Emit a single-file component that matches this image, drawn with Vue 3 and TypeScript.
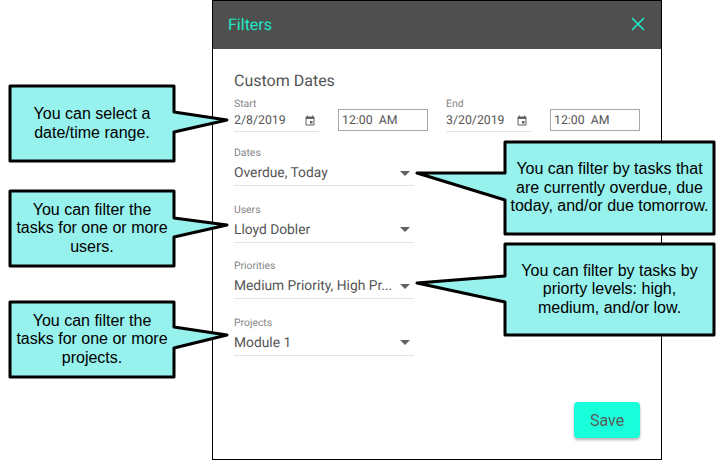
<script setup lang="ts">
const dateRanges = [
  { label: 'Start', date: '2/8/2019', time: '12:00  AM' },
  { label: 'End', date: '3/20/2019', time: '12:00  AM' },
];
const selects = [
  { label: 'Dates', value: 'Overdue, Today' },
  { label: 'Users', value: 'Lloyd Dobler' },
  { label: 'Priorities', value: 'Medium Priority, High Pr...' },
  { label: 'Projects', value: 'Module 1' },
];
// callout outlines, drawn over the dialog
const callouts = [
  { key: 'note-range', points: '10,86 174,86 174,112 227,120 174,132 174,161 10,161', lines: ['You can select a', 'date/time range.'] },
  { key: 'note-users', points: '10,191 174,191 174,218 227,225 174,237 174,266 10,266', lines: ['You can filter the', 'tasks for one or more', 'users.'] },
  { key: 'note-projects', points: '10,302 174,302 174,327 227,335 174,348 174,377 10,377', lines: ['You can filter the', 'tasks for one or more', 'projects.'] },
  { key: 'note-dates', points: '505,142 714,142 714,234 505,234 505,200 417,173 505,173', lines: ['You can filter by tasks that', 'are currently overdue, due', 'today, and/or due tomorrow.'] },
  { key: 'note-priorities', points: '505,244 714,244 714,335 505,335 505,302 417,283 505,276', lines: ['You can filter by tasks by', 'priorty levels: high,', 'medium, and/or low.'] },
];
</script>

<template>
  <div class="page">
    <section class="dialog">
      <header class="head">
        <span class="title">Filters</span>
        <svg class="close" width="14" height="14" viewBox="0 0 14 14"><path d="M1 1 13 13M13 1 1 13" stroke="#1de9c9" stroke-width="1.6" fill="none" /></svg>
      </header>
      <div class="body">
        <h2 class="sub">Custom Dates</h2>
        <div class="dates">
          <div v-for="d in dateRanges" :key="d.label" class="range">
            <div class="date-field">
              <label class="lbl">{{ d.label }}</label>
              <div class="val date-val">
                <span>{{ d.date }}</span>
                <svg width="12" height="12" viewBox="0 0 24 24" fill="#616161"><path d="M17 12h-5v5h5v-5zM16 1v2H8V1H6v2H5c-1.11 0-2 .9-2 2v14c0 1.1.89 2 2 2h14c1.1 0 2-.9 2-2V5c0-1.1-.9-2-2-2h-1V1h-2zm3 18H5V8h14v11z" /></svg>
              </div>
            </div>
            <div class="time">{{ d.time }}</div>
          </div>
        </div>
        <div v-for="s in selects" :key="s.label" class="select">
          <label class="lbl">{{ s.label }}</label>
          <div class="val select-val">
            <span>{{ s.value }}</span>
            <i class="caret"></i>
          </div>
        </div>
        <div class="actions"><button class="save">Save</button></div>
      </div>
    </section>

    <svg class="shapes" width="724" height="460" viewBox="0 0 724 460">
      <polygon v-for="c in callouts" :key="c.key" :points="c.points" fill="#97f1ed" stroke="#000" stroke-width="3" stroke-linejoin="round" />
    </svg>
    <div v-for="c in callouts" :key="c.key" class="note" :class="c.key">
      <span v-for="l in c.lines" :key="l">{{ l }}</span>
    </div>
  </div>
</template>

<style>
html, body { margin: 0; background: #fff; }
</style>

<style scoped>
.page {
  position: relative;
  width: 724px;
  height: 460px;
  overflow: hidden;
  font-family: Roboto, sans-serif;
  color: #555;
}
.dialog {
  box-sizing: border-box;
  width: 450px;
  height: 460px;
  margin-left: 212px;
  border: 1px solid #000;
  display: flex;
  flex-direction: column;
  text-rendering: geometricPrecision;
}
.head {
  height: 48px;
  background: #4f4f4f;
  display: flex;
  align-items: center;
  justify-content: space-between;
  padding: 0 16px 0 15px;
}
.title { margin-bottom: 2px; font-size: 16px; font-weight: 400; color: #1de9c9; }
.close { margin-bottom: 3px; }
.body {
  flex: 1;
  display: flex;
  flex-direction: column;
  padding: 22px 21px 21px;
}
.sub { margin: 0; font-size: 16px; font-weight: 400; line-height: 19px; color: #555; }
.dates { display: flex; gap: 18px; margin-top: 7px; }
.range { display: flex; align-items: flex-end; gap: 19px; }
.date-field { width: 85px; border-bottom: 1px solid #e2e2e2; }
.lbl { display: block; padding-top: 1px; font-size: 10.4px; line-height: 12px; color: #858585; }
.val { display: flex; align-items: center; justify-content: space-between; color: #555; }
.date-val { margin-top: 1px; padding-right: 3px; font-size: 12.3px; line-height: 20px; }
.time {
  box-sizing: border-box;
  width: 90px;
  height: 22px;
  border: 1px solid #a8a8a8;
  padding: 1px 0 0 3px;
  font-size: 12.3px;
  line-height: 20px;
  white-space: pre;
  margin-bottom: 1px;
}
.select {
  width: 180px;
  margin-top: 16.67px;
  border-bottom: 1px solid #e2e2e2;
  padding-bottom: 1px;
}
.dates + .select { margin-top: 14px; }
.select-val { margin-top: 3px; font-size: 13.8px; line-height: 22px; }
.caret {
  width: 0;
  height: 0;
  margin-right: 4px;
  border-left: 5px solid transparent;
  border-right: 5px solid transparent;
  border-top: 5px solid #616161;
}
.actions { margin-top: auto; display: flex; justify-content: flex-end; }
.save {
  width: 66px;
  height: 36px;
  border: 0;
  border-radius: 4px;
  background: #19ffdc;
  color: #5a5a5a;
  font-family: inherit;
  font-size: 16px;
  box-shadow: 0 2px 3px rgba(0, 0, 0, 0.3);
}
.shapes { position: absolute; left: 0; top: 0; }
.note {
  position: absolute;
  display: flex;
  flex-direction: column;
  align-items: center;
  justify-content: center;
  font-family: "Liberation Sans", Arial, sans-serif;
  font-size: 16px;
  line-height: 18.6px;
  color: #000;
  white-space: nowrap;
}
.note-range { left: 10px; top: 86px; width: 164px; height: 75px; }
.note-users { left: 10px; top: 191px; width: 164px; height: 75px; }
.note-projects { left: 10px; top: 302px; width: 164px; height: 75px; }
.note-dates { left: 505px; top: 142px; width: 209px; height: 92px; }
.note-priorities { left: 505px; top: 244px; width: 209px; height: 91px; }
</style>
